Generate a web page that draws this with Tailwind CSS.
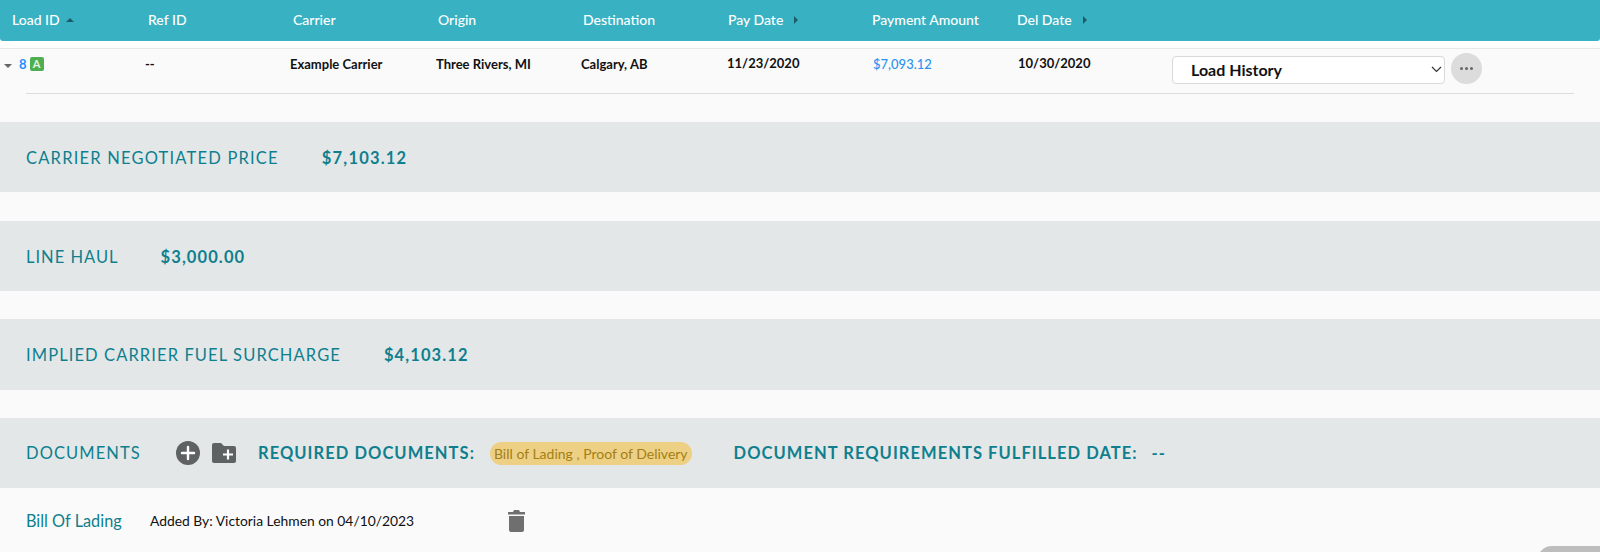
<!DOCTYPE html>
<html lang="en">
<head>
    <meta charset="UTF-8">
    <title>Load Details</title>
    <script src="https://cdn.jsdelivr.net/npm/@tailwindcss/browser@4"></script>
</head>
<body class="relative h-[552px] w-[1600px] overflow-hidden bg-white font-['Lato',sans-serif]">

    <!-- Table header -->
    <div class="flex h-[41px] items-center rounded-b-[3px] bg-[#38b2c3] pb-[2px] pl-3 text-[14px] font-medium text-white">
        <div class="flex w-[136px] items-center gap-[6px]">Load ID
            <span class="h-0 w-0 border-x-[4px] border-b-[4px] border-x-transparent border-b-[#1d5c68]"></span>
        </div>
        <div class="w-[145px]">Ref ID</div>
        <div class="w-[145px]">Carrier</div>
        <div class="w-[145px]">Origin</div>
        <div class="w-[145px]">Destination</div>
        <div class="flex w-[144px] items-center gap-[11px]">Pay Date
            <span class="h-0 w-0 border-y-[4px] border-l-[4px] border-y-transparent border-l-[#1d5c68]"></span>
        </div>
        <div class="w-[145px]">Payment Amount</div>
        <div class="flex items-center gap-[11px]">Del Date
            <span class="h-0 w-0 border-y-[4px] border-l-[4px] border-y-transparent border-l-[#1d5c68]"></span>
        </div>
    </div>

    <div class="mt-[7px] h-[504px] border-t border-[#e8e8e8] bg-[#fafafa]">
        <!-- Load row -->
        <div class="ml-[26px] mr-[26px] flex h-[45px] border-b border-[#dcdcdc] pt-[5px] text-[13px] font-bold text-[#111]">
            <div class="relative flex w-[119px] items-start gap-[3px] pt-[1px]">
                <span class="absolute left-[-22px] top-[10px] h-0 w-0 border-x-[4px] border-t-[4px] border-x-transparent border-t-[#666]"></span>
                <span class="ml-[-7px] text-[#1e90ff]">8</span>
                <span class="mt-[2px] flex h-[14px] w-[14px] items-center justify-center rounded-[2px] bg-[#4caf50] text-[11px] text-[#e4f5e4]">A</span>
            </div>
            <div class="w-[145px] pt-[1px]">--</div>
            <div class="w-[146px] pt-[1px]">Example Carrier</div>
            <div class="w-[145px] pt-[1px]">Three Rivers, MI</div>
            <div class="w-[146px] pt-[1px]">Calgary, AB</div>
            <div class="w-[146px]">11/23/2020</div>
            <div class="w-[145px] pt-[1px] font-medium text-[#2b93f0]">$7,093.12</div>
            <div class="w-[154px]">10/30/2020</div>
            <div class="relative mt-[2px] h-[28px] w-[273px]">
                <select class="h-[28px] w-full appearance-none rounded-[4px] border border-[#d9d9d9] bg-white pl-[18px] text-[16px] font-bold text-[#111]">
                    <option>Load History</option>
                </select>
                <svg class="absolute right-[3px] top-[10px] h-[7px] w-[11px]" viewBox="0 0 11 7" fill="none" stroke="#333" stroke-width="1.2"><path d="M1 1l4.5 4.5L10 1"/></svg>
            </div>
            <div class="ml-[6px] flex h-[31px] w-[31px] -translate-y-[1px] items-center justify-center gap-[2px] rounded-full bg-[#dcdcdc]">
                <span class="h-[3px] w-[3px] rounded-full bg-[#666]"></span>
                <span class="h-[3px] w-[3px] rounded-full bg-[#666]"></span>
                <span class="h-[3px] w-[3px] rounded-full bg-[#666]"></span>
            </div>
        </div>

        <!-- Price bands -->
        <div class="mt-[28px] flex h-[70px] items-center gap-[43px] bg-[#e3e7e8] pl-[26px] pt-[2px] text-[16.5px] tracking-[1.2px] text-[#0f7f8e]">
            <span>CARRIER NEGOTIATED PRICE</span>
            <span class="font-bold tracking-[1.2px]">$7,103.12</span>
        </div>
        <div class="mt-[29px] flex h-[70px] items-center gap-[42px] bg-[#e3e7e8] pl-[26px] pt-[2px] text-[16.5px] tracking-[1px] text-[#0f7f8e]">
            <span>LINE HAUL</span>
            <span class="font-bold tracking-[1.1px]">$3,000.00</span>
        </div>
        <div class="mt-[28px] flex h-[71px] items-center gap-[43px] bg-[#e3e7e8] pl-[26px] pt-[2px] text-[16.5px] tracking-[1.1px] text-[#0f7f8e]">
            <span>IMPLIED CARRIER FUEL SURCHARGE</span>
            <span class="font-bold tracking-[1.1px]">$4,103.12</span>
        </div>

        <!-- Documents -->
        <div class="mt-[28px] flex h-[70px] items-center bg-[#e3e7e8] pl-[26px] text-[16.5px] tracking-[1.05px] text-[#0f7f8e]">
            <span class="w-[150px] tracking-[1.1px]">DOCUMENTS</span>
            <svg class="h-[24px] w-[24px]" viewBox="0 0 24 24"><circle cx="12" cy="12" r="12" fill="#5f6263"/><path d="M12 6v12M6 12h12" stroke="#fff" stroke-width="2.4" stroke-linecap="round"/></svg>
            <svg class="ml-[12px] h-[20px] w-[24px]" viewBox="0 0 24 20"><path d="M2 0h7l3 3h10a2 2 0 0 1 2 2v13a2 2 0 0 1-2 2H2a2 2 0 0 1-2-2V2a2 2 0 0 1 2-2z" fill="#5f6263"/><path d="M16 6.5v10M11 11.5h10" stroke="#fff" stroke-width="2.2"/></svg>
            <span class="ml-[22px] font-bold">REQUIRED DOCUMENTS:</span>
            <span class="ml-[15px] rounded-full bg-[#eed084] px-[4px] py-[1px] text-[14px] tracking-normal text-[#a37f14]">Bill of Lading , Proof of Delivery</span>
            <span class="ml-[42px] font-bold">DOCUMENT REQUIREMENTS FULFILLED DATE:</span>
            <span class="ml-[14px] font-bold">--</span>
        </div>

        <!-- Document row -->
        <div class="flex h-[66px] items-center pl-[26px]">
            <span class="w-[124px] text-[16.3px] text-[#0f7f8e]">Bill Of Lading</span>
            <span class="w-[358px] text-[13.85px] text-[#111]">Added By: Victoria Lehmen on 04/10/2023</span>
            <svg class="h-[22px] w-[17px]" viewBox="0 0 17 22" fill="#6f6f6f"><path d="M6 0h5l1 2h5v2.5H0V2h5z"/><path d="M1 6h15v14a2 2 0 0 1-2 2H3a2 2 0 0 1-2-2z"/></svg>
        </div>
    </div>

    <!-- Scroll handle peeking in at the bottom corner -->
    <div class="absolute left-[1537px] top-[546px] h-[30px] w-[100px] rounded-[20px] bg-[#bdbdbd]"></div>
</body>
</html>
